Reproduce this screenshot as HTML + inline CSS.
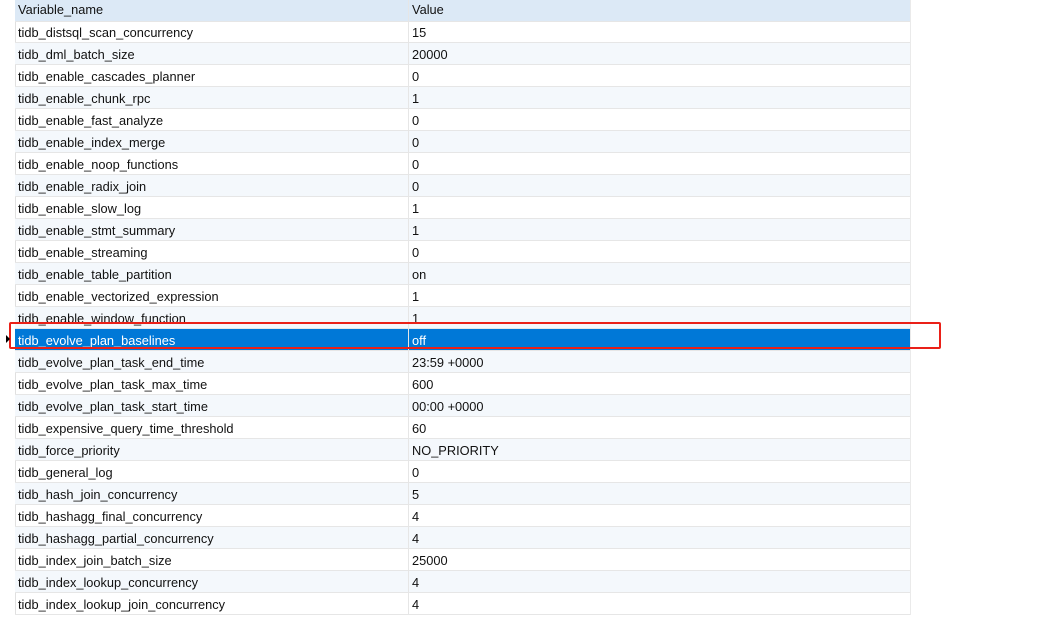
<!DOCTYPE html><html><head><style>
body{margin:0;width:1054px;height:618px;background:#fff;overflow:hidden;font-family:"Liberation Sans","Noto Sans CJK SC",sans-serif;font-size:12.8px;color:#111;position:relative}
.r{position:absolute;left:15px;width:895px;height:21px;border-bottom:1px solid #e6e6e6;line-height:23px}
.r span{position:absolute;top:0}
.a{left:3px}.b{left:397px}
.r:before{content:"";position:absolute;left:393px;top:0;bottom:-1px;border-left:1px solid #e6e6e6}
.alt{background:#f4f8fc}
.hd{background:#dce9f6;top:0}
.hd{line-height:20px}
.sel{background:#0078d7;color:#fff}
.gut{position:absolute;left:15px;top:0;height:615px;border-left:1px solid #e0e0e0}
.rt{position:absolute;left:910px;top:0;height:615px;border-left:1px solid #eaeaea}
</style></head><body>
<div class="gut"></div><div class="rt"></div>
<div class="r hd" style="top:0"><span class="a">Variable_name</span><span class="b">Value</span></div>
<div id="t"></div>
<script>
var d=[["tidb_distsql_scan_concurrency","15"],["tidb_dml_batch_size","20000"],["tidb_enable_cascades_planner","0"],["tidb_enable_chunk_rpc","1"],["tidb_enable_fast_analyze","0"],["tidb_enable_index_merge","0"],["tidb_enable_noop_functions","0"],["tidb_enable_radix_join","0"],["tidb_enable_slow_log","1"],["tidb_enable_stmt_summary","1"],["tidb_enable_streaming","0"],["tidb_enable_table_partition","on"],["tidb_enable_vectorized_expression","1"],["tidb_enable_window_function","1"],["tidb_evolve_plan_baselines","off"],["tidb_evolve_plan_task_end_time","23:59 +0000"],["tidb_evolve_plan_task_max_time","600"],["tidb_evolve_plan_task_start_time","00:00 +0000"],["tidb_expensive_query_time_threshold","60"],["tidb_force_priority","NO_PRIORITY"],["tidb_general_log","0"],["tidb_hash_join_concurrency","5"],["tidb_hashagg_final_concurrency","4"],["tidb_hashagg_partial_concurrency","4"],["tidb_index_join_batch_size","25000"],["tidb_index_lookup_concurrency","4"],["tidb_index_lookup_join_concurrency","4"]];
var h="";d.forEach(function(x,i){var c="r"+(i==14?" sel":(i%2==1?" alt":""));h+='<div class="'+c+'" style="top:'+(21+i*22)+'px"><span class="a">'+x[0]+'</span><span class="b">'+x[1]+'</span></div>';});
document.getElementById("t").innerHTML=h;
</script>
<div style="position:absolute;left:9px;top:322px;width:928px;height:23px;border:2.5px solid #ea2018;border-radius:2px"></div>
<div style="position:absolute;left:6px;top:335px;width:0;height:0;border-left:4px solid #000;border-top:4px solid transparent;border-bottom:4px solid transparent"></div>
</body></html>
